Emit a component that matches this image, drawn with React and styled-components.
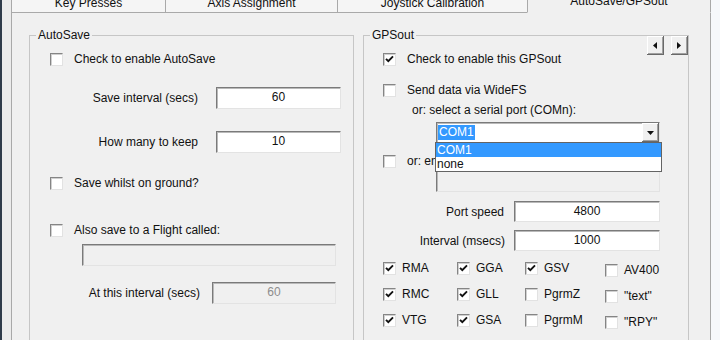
import React from "react";
import styled, { createGlobalStyle } from "styled-components";

const GlobalStyle = createGlobalStyle`
    html, body {
        margin: 0;
        padding: 0;
    }
    body {
        background: #ebebeb;
        font-family: "Liberation Sans", Arial, sans-serif;
        font-size: 12px;
        color: #111;
    }
`;

const Window = styled.div`
    width: 720px;
    height: 340px;
    overflow: hidden;
    display: flex;
    background: #ebebeb;
`;

const FrameLeft = styled.div`
    width: 11px;
    flex: none;
    box-sizing: border-box;
    border-left: 2px solid #2f3b4a;
`;

const FrameRight = styled.div`
    flex: 1;
    background: #f6f8fb;
`;

const Main = styled.div`
    width: 700px;
    flex: none;
    display: flex;
    flex-direction: column;
`;

const TabStrip = styled.div`
    height: 13px;
    flex: none;
    display: flex;
    align-items: flex-end;
    overflow: hidden;
`;

const Tab = styled.div`
    width: ${({ $width }) => $width}px;
    height: 21px;
    flex: none;
    box-sizing: border-box;
    border: 1px solid #a9a9a9;
    border-right: ${({ $last }) => ($last ? "1px solid #a9a9a9" : "none")};
    border-bottom-color: ${({ $active }) => ($active ? "#f0f0f0" : "#a9a9a9")};
    background: ${({ $active }) => ($active ? "#f0f0f0" : "#f5f5f5")};
    padding-top: ${({ $active }) => ($active ? 1 : 3)}px;
    line-height: 14px;
    text-align: center;
    white-space: nowrap;
`;

const Page = styled.div`
    flex: 1;
    display: flex;
    align-items: flex-start;
    gap: 9px;
    padding: 22px 21px 0 17px;
    border: 1px solid #a9a9a9;
    border-top: none;
    background: #f0f0f0;
`;

const Group = styled.div`
    position: relative;
    width: ${({ $width }) => $width}px;
    height: 330px;
    flex: none;
    box-sizing: border-box;
    display: flex;
    flex-direction: column;
    align-items: flex-start;
    border: 1px solid #c6c6c6;
`;

const Legend = styled.div`
    position: absolute;
    top: -8px;
    left: 6px;
    padding: 0 2px;
    line-height: 14px;
    background: #f0f0f0;
`;

const CheckRow = styled.div`
    display: flex;
    align-items: center;
    gap: ${({ $gap }) => $gap ?? 11}px;
    height: 18px;
    box-sizing: border-box;
    padding-top: ${({ $drop }) => $drop ?? 0}px;
    margin-top: ${({ $mt }) => $mt ?? 0}px;
    margin-left: ${({ $ml }) => $ml ?? 0}px;
    white-space: nowrap;
`;

const Box = styled.span`
    width: 13px;
    height: 13px;
    flex: none;
    box-sizing: border-box;
    display: flex;
    align-items: center;
    justify-content: center;
    background: #fff;
    border: 1px solid;
    border-color: #858585 #e2e2e2 #e2e2e2 #858585;
    box-shadow: inset 1px 1px 0 #d0d0d0;
`;

const Note = styled.div`
    line-height: 14px;
    margin-top: ${({ $mt }) => $mt}px;
    margin-left: ${({ $ml }) => $ml}px;
    white-space: nowrap;
`;

const FieldRow = styled.div`
    display: flex;
    align-items: center;
    margin-top: ${({ $mt }) => $mt ?? 0}px;
`;

const FieldLabel = styled.span`
    width: ${({ $width }) => $width}px;
    margin-right: ${({ $gap }) => $gap}px;
    text-align: right;
    white-space: nowrap;
`;

const TextBox = styled.div`
    width: ${({ $width }) => $width}px;
    height: ${({ $height }) => $height ?? 22}px;
    flex: none;
    box-sizing: border-box;
    margin-top: ${({ $mt }) => $mt ?? 0}px;
    margin-left: ${({ $ml }) => $ml ?? 0}px;
    display: flex;
    align-items: center;
    justify-content: center;
    padding-bottom: 2px;
    background: ${({ $disabled }) => ($disabled ? "#f0f0f0" : "#fff")};
    color: ${({ $disabled }) => ($disabled ? "#8d8d8d" : "#111")};
    border: 1px solid;
    border-color: #7a7a7a #e3e3e3 #e3e3e3 #7a7a7a;
    box-shadow: inset 1px 1px 0 #b9b9b9;
`;

const Combo = styled.div`
    position: relative;
    width: 224px;
    height: 21px;
    box-sizing: border-box;
    margin-top: 5px;
    margin-left: 72px;
    display: flex;
    align-items: center;
    background: #fff;
    border: 1px solid;
    border-color: #7a7a7a #e3e3e3 #e3e3e3 #7a7a7a;
    box-shadow: inset 1px 1px 0 #b9b9b9;
`;

const ComboText = styled.span`
    margin-left: 1px;
    padding: 0 1px;
    line-height: 15px;
    background: #3399ff;
    color: #fff;
`;

const DropButton = styled.span`
    margin-left: auto;
    width: 17px;
    height: 100%;
    box-sizing: border-box;
    display: flex;
    align-items: center;
    justify-content: center;
    background: #f0f0f0;
    box-shadow: inset -1px -1px 0 #696969, inset 1px 1px 0 #ffffff,
        inset -2px -2px 0 #a0a0a0;
`;

const DropList = styled.div`
    position: absolute;
    top: 100%;
    left: -2px;
    width: 227px;
    box-sizing: border-box;
    border: 1px solid #646464;
    background: #fff;
    z-index: 2;
`;

const ListItem = styled.div`
    height: 14px;
    line-height: 14px;
    padding-left: 1px;
    background: ${({ $selected }) => ($selected ? "#3399ff" : "#fff")};
    color: ${({ $selected }) => ($selected ? "#fff" : "#111")};
`;

const SpinPair = styled.div`
    position: absolute;
    top: 0;
    right: 0;
    display: flex;
    gap: 7px;
`;

const SpinButton = styled.span`
    width: 17px;
    height: 19px;
    box-sizing: border-box;
    display: flex;
    align-items: center;
    justify-content: center;
    padding-right: 2px;
    background: #f0f0f0;
    box-shadow: inset -1px -1px 0 #696969, inset 1px 1px 0 #ffffff,
        inset -2px -2px 0 #a0a0a0;
`;

const SentenceGrid = styled.div`
    display: grid;
    grid-template-columns: 74px 68px 80px 80px;
    grid-auto-rows: 18px;
    row-gap: 8px;
    margin-top: 8px;
    margin-left: 19px;
`;

const Check = ({ checked }) => (
    <Box>
        {checked && (
            <svg width="9" height="8" viewBox="0 0 9 8">
                <polyline
                    points="1,3.8 3.3,6.2 8,1.3"
                    fill="none"
                    stroke="#111"
                    strokeWidth="1.9"
                />
            </svg>
        )}
    </Box>
);

const Arrow = ({ dir }) => (
    <svg width="4" height="7" viewBox="0 0 4 7">
        <polygon
            points={dir === "left" ? "4,0 4,7 0,3.5" : "0,0 0,7 4,3.5"}
            fill="#111"
        />
    </svg>
);

const tabs = [
    { label: "Key Presses", width: 154 },
    { label: "Axis Assignment", width: 172 },
    { label: "Joystick Calibration", width: 190 },
    { label: "AutoSave/GPSout", width: 184, active: true },
];

const sentences = [
    ["RMA", true], ["GGA", true], ["GSV", true], ["AV400", false],
    ["RMC", true], ["GLL", true], ["PgrmZ", false], ['"text"', false],
    ["VTG", true], ["GSA", true], ["PgrmM", false], ['"RPY"', false],
];

const App = () => (
    <>
        <GlobalStyle />
        <Window>
            <FrameLeft />
            <Main>
                <TabStrip>
                    {tabs.map((t, i) => (
                        <Tab
                            key={t.label}
                            $width={t.width}
                            $active={t.active}
                            $last={i === tabs.length - 1}
                        >
                            {t.label}
                        </Tab>
                    ))}
                </TabStrip>
                <Page>
                    <Group $width={325}>
                        <Legend>AutoSave</Legend>
                        <CheckRow $mt={14} $ml={20}>
                            <Check />
                            Check to enable AutoSave
                        </CheckRow>
                        <FieldRow $mt={19}>
                            <FieldLabel $width={168} $gap={18}>Save interval (secs)</FieldLabel>
                            <TextBox $width={125}>60</TextBox>
                        </FieldRow>
                        <FieldRow $mt={22}>
                            <FieldLabel $width={168} $gap={18}>How many to keep</FieldLabel>
                            <TextBox $width={125}>10</TextBox>
                        </FieldRow>
                        <CheckRow $mt={21} $ml={20}>
                            <Check />
                            Save whilst on ground?
                        </CheckRow>
                        <CheckRow $mt={29} $ml={20}>
                            <Check />
                            Also save to a Flight called:
                        </CheckRow>
                        <TextBox $width={254} $mt={5} $ml={52} $disabled />
                        <FieldRow $mt={16}>
                            <FieldLabel $width={170} $gap={12}>At this interval (secs)</FieldLabel>
                            <TextBox $width={124} $disabled>60</TextBox>
                        </FieldRow>
                    </Group>

                    <Group $width={326}>
                        <Legend>GPSout</Legend>
                        <SpinPair>
                            <SpinButton><Arrow dir="left" /></SpinButton>
                            <SpinButton><Arrow dir="right" /></SpinButton>
                        </SpinPair>
                        <CheckRow $mt={14} $ml={19}>
                            <Check checked />
                            Check to enable this GPSout
                        </CheckRow>
                        <CheckRow $mt={13} $ml={19}>
                            <Check />
                            Send data via WideFS
                        </CheckRow>
                        <Note $mt={4} $ml={48}>or: select a serial port (COMn):</Note>
                        <Combo>
                            <ComboText>COM1</ComboText>
                            <DropButton>
                                <svg width="7" height="4" viewBox="0 0 7 4">
                                    <polygon points="0,0 7,0 3.5,4" fill="#111" />
                                </svg>
                            </DropButton>
                            <DropList>
                                <ListItem $selected>COM1</ListItem>
                                <ListItem>none</ListItem>
                            </DropList>
                        </Combo>
                        <CheckRow $mt={9} $ml={19}>
                            <Check />
                            or: enter a file name:
                        </CheckRow>
                        <TextBox $width={224} $ml={72} $disabled />
                        <FieldRow $mt={9}>
                            <FieldLabel $width={140} $gap={10}>Port speed</FieldLabel>
                            <TextBox $width={146} $height={21}>4800</TextBox>
                        </FieldRow>
                        <FieldRow $mt={8}>
                            <FieldLabel $width={141} $gap={9}>Interval (msecs)</FieldLabel>
                            <TextBox $width={146} $height={21}>1000</TextBox>
                        </FieldRow>
                        <SentenceGrid>
                            {sentences.map(([name, on], i) => (
                                <CheckRow key={name} $gap={6} $drop={i % 4 === 3 ? 4 : 0}>
                                    <Check checked={on} />
                                    {name}
                                </CheckRow>
                            ))}
                        </SentenceGrid>
                    </Group>
                </Page>
            </Main>
            <FrameRight />
        </Window>
    </>
);

export default App;
